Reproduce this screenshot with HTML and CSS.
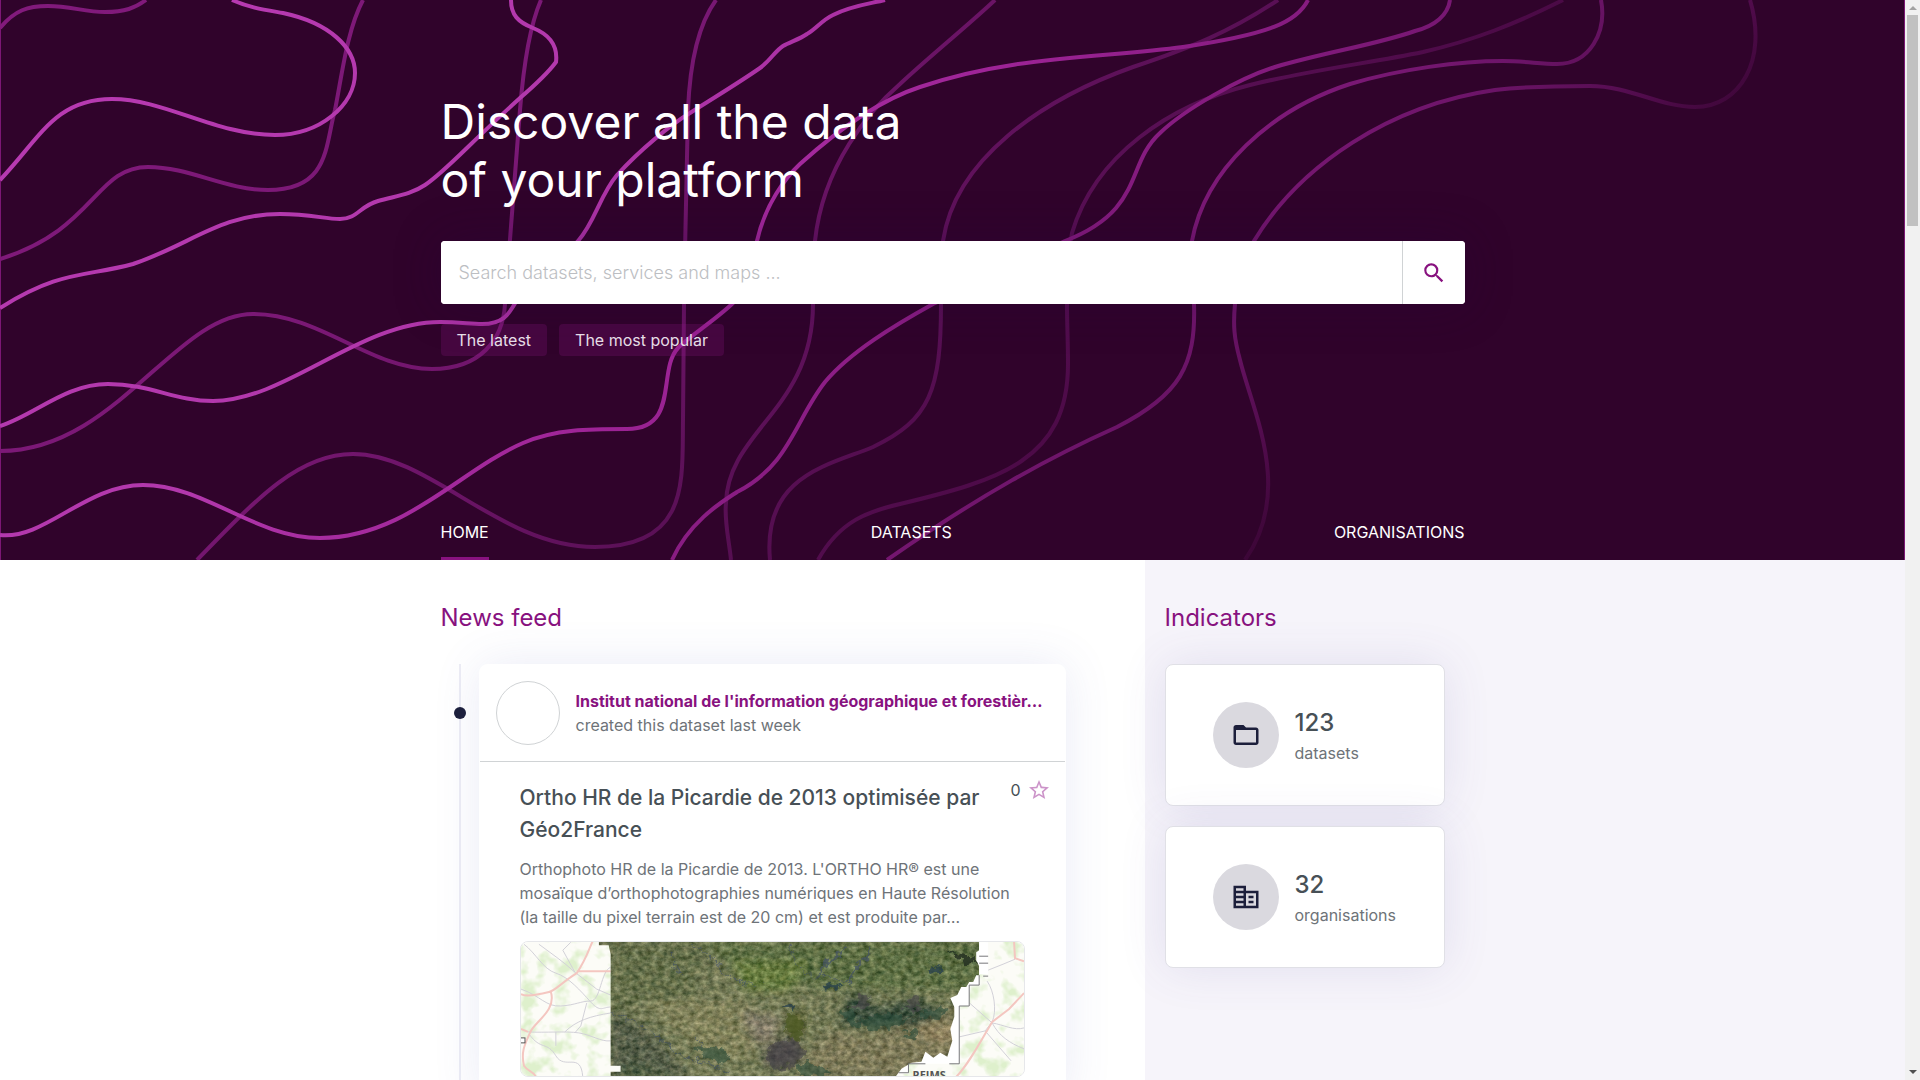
FILE: index.html
```html
<!DOCTYPE html>
<html lang="en">
<head>
<meta charset="utf-8">
<meta name="viewport" content="width=device-width, initial-scale=1">
<title>Datahub</title>
<link rel="stylesheet" href="styles.css">
</head>
<body>
<div class="page">
  <header class="hero">
    <svg class="hero-lines" viewBox="0 0 1905 560" preserveAspectRatio="xMidYMin slice" aria-hidden="true">
      <defs>
        <linearGradient id="bright" gradientUnits="userSpaceOnUse" x1="0" y1="0" x2="871" y2="962">
          <stop offset="0" stop-color="#b83ab2"/><stop offset=".38" stop-color="#b238ac"/><stop offset=".55" stop-color="#9e2497"/><stop offset=".7" stop-color="#821a7c"/><stop offset=".82" stop-color="#6c1468"/><stop offset=".92" stop-color="#4c0a47"/><stop offset="1" stop-color="#30032b"/>
        </linearGradient>
        <linearGradient id="dim" gradientUnits="userSpaceOnUse" x1="0" y1="0" x2="871" y2="962">
          <stop offset="0" stop-color="#821a7c"/><stop offset=".35" stop-color="#7a1875"/><stop offset=".5" stop-color="#6c1467"/><stop offset=".65" stop-color="#5a1056"/><stop offset=".8" stop-color="#4c0a47"/><stop offset=".95" stop-color="#30032b"/>
        </linearGradient>
      </defs>
      <g class="lines" stroke="url(#dim)">
        <path d="M0 28C15 10 28 6 48 6C70 6 85 12 105 12C125 12 135 8 146 0"/>
        <path d="M0 259C95 230 95 167 148 167C190 167 225 190 268 190C330 190 325 145 335 110C342 75 347 30 363 0"/>
        <path d="M0 451C115 451 175 314 253 314C320 314 370 369 432 369C480 369 503 340 505 304C509 250 514 180 520 110C524 60 530 25 541 0"/>
        <path d="M197 560C260 495 300 454 353 454C430 454 500 547 595 547C690 547 682 480 683 420L684 304C685 240 687 170 688 110C690 60 700 22 716 0"/>
        <path d="M731 560C729 540 724 520 726 503C728 430 813 410 813 304C813 285 813 265 815 241C823 165 870 110 900 84C930 56 965 28 995 0"/>
        <path d="M770 560C762 475 830 465 873 447C930 420 941 390 941 304C941 285 941 260 943 241C955 160 1040 100 1133 67C1190 48 1230 32 1278 0"/>
        <path d="M818 560C840 520 870 511 900 504C1000 480 1068 460 1068 364C1068 340 1067 325 1067 304C1067 280 1067 260 1072 233C1095 155 1170 105 1250 85C1310 70 1370 63 1423 52C1475 40 1515 24 1563 0"/>
      </g>
      <g class="lines" stroke="url(#bright)">
        <path d="M232 0C250 8 266 10 283 13C330 23 355 48 355 73C355 105 320 135 275 135C215 135 165 99 112 99C55 99 40 138 0 180"/>
        <path d="M0 308C60 270 85 277 133 264C190 245 220 214 280 214C310 214 325 219 340 219C357 219 360 206 378 201C395 196 410 195 425 185C445 172 470 143 520 98C535 85 548 73 556 62C558 45 548 34 533 28C518 22 511 15 511 0"/>
        <path d="M0 426C35 415 65 384 108 384C150 384 175 401 213 401C285 401 360 322 440 322C460 322 470 324 482 324C515 324 510 300 530 285C550 270 565 257 578 241C595 222 600 195 617 175C640 150 670 125 690 113C715 97 740 82 760 68C770 61 775 51 783 46C790 42 800 39 807 34C815 30 822 20 833 15C850 6 868 4 885 0"/>
        <path d="M0 535C45 540 85 485 143 485C205 485 255 538 320 538C405 538 460 470 523 443C555 429 590 429 627 429C680 429 657 370 678 348C690 336 715 320 732 304C755 285 750 262 757 241C765 205 785 178 800 164C840 128 880 100 920 87C1010 56 1100 58 1183 47C1270 34 1297 22 1308 0"/>
        <path d="M672 560C690 520 725 500 737 492C790 465 795 420 825 382C850 352 895 325 933 304C975 285 1020 262 1065 241C1145 210 1125 165 1160 133C1185 109 1240 78 1275 67C1330 51 1375 45 1415 31C1435 26 1448 15 1450 0"/>
        <path d="M887 560C980 495 1050 457 1117 427C1180 395 1196 365 1194 304C1190 280 1190 262 1192 241C1205 170 1270 110 1350 84C1400 69 1460 61 1503 61C1525 61 1540 64 1557 64C1590 64 1607 32 1601 0"/>
        <path d="M1245 560C1294 490 1252 410 1240 360C1234 338 1233 325 1235 304C1237 280 1243 260 1254 241C1300 165 1390 105 1495 90C1530 86 1560 86 1590 86C1630 86 1660 107 1695 107C1740 107 1768 60 1750 0"/>
      </g>
    </svg>
    <div class="container hero-content">
      <h1 class="hero-title">Discover all the data<br>of your platform</h1>
      <form class="search" role="search">
        <input class="search-input" type="text" aria-label="Search" placeholder="Search datasets, services and maps ...">
        <button class="search-button" type="button" aria-label="Search">
          <svg viewBox="0 0 24 24" width="26" height="26"><path fill="currentColor" d="M15.5 14h-.79l-.28-.27A6.47 6.47 0 0 0 16 9.500 6.500 6.500 0 1 0 9.500 16c1.610 0 3.090-.59 4.230-1.570l.27.28v.79l5 4.990L20.490 19l-4.990-5zm-6 0C7.010 14 5 11.990 5 9.500S7.010 5 9.500 5 14 7.010 14 9.500 11.990 14 9.500 14z"/></svg>
        </button>
      </form>
      <div class="chips">
        <button class="chip" type="button">The latest</button>
        <button class="chip" type="button">The most popular</button>
      </div>
      <nav class="tabs">
        <a class="tab tab-active" href="#home">HOME</a>
        <a class="tab" href="#datasets">DATASETS</a>
        <a class="tab" href="#organisations">ORGANISATIONS</a>
      </nav>
    </div>
  </header>

  <main class="main">
    <section class="news">
      <h2 class="heading">News feed</h2>
      <div class="feed">
        <div class="timeline"><span class="dot"></span></div>
        <article class="post">
          <div class="post-head">
            <span class="avatar"></span>
            <div class="post-meta">
              <a class="org" href="#ign">Institut national de l'information géographique et forestièr…</a>
              <p class="action">created this dataset last week</p>
            </div>
          </div>
          <div class="post-body">
            <div class="post-top">
              <h3 class="post-title">Ortho HR de la Picardie de 2013 optimisée par Géo2France</h3>
              <button class="favorite" type="button" aria-label="Add to favorites">0
                <svg viewBox="0 0 24 24" width="24" height="24"><path fill="currentColor" d="M22 9.240l-7.190-.62L12 2 9.190 8.630 2 9.240l5.460 4.730L5.820 21 12 17.270 18.180 21l-1.630-7.030L22 9.240zM12 15.400l-3.760 2.270 1-4.280-3.320-2.880 4.380-.38L12 6.100l1.710 4.040 4.380.38-3.320 2.880 1 4.280L12 15.400z"/></svg>
              </button>
            </div>
            <p class="description">Orthophoto HR de la Picardie de 2013. L'ORTHO HR® est une mosaïque d’orthophotographies numériques en Haute Résolution (la taille du pixel terrain est de 20 cm) et est produite par…</p>
            <svg class="map" viewBox="0 0 505 136" preserveAspectRatio="xMidYMid slice" role="img" aria-label="Dataset preview">
              <defs>
                <filter id="fields" x="0" y="0" width="100%" height="100%" color-interpolation-filters="sRGB">
                  <feTurbulence type="fractalNoise" baseFrequency=".16 .2" numOctaves="4" seed="8"/>
                  <feColorMatrix type="matrix" values="1 0 0 0 0  .9 .1 0 0 0  .8 .1 .1 0 0  0 0 0 0 1" result="g"/>
                  <feComposite in="SourceGraphic" in2="g" operator="arithmetic" k1="0" k2="1" k3=".5" k4="-.25"/>
                  <feColorMatrix type="matrix" values="1 0 0 0 0  0 1 0 0 0  0 0 1 0 0  0 0 0 0 1"/>
                </filter>
                <filter id="light" x="0" y="0" width="100%" height="100%" color-interpolation-filters="sRGB">
                  <feTurbulence type="fractalNoise" baseFrequency=".06" numOctaves="3" seed="3"/>
                  <feColorMatrix type="matrix" values="0 0 0 0 .87  0 0 0 0 .94  0 0 0 0 .8  0 4 0 0 -1.900"/>
                </filter>
                <filter id="soft" x="-30%" y="-30%" width="160%" height="160%"><feGaussianBlur stdDeviation="5"/></filter>
                <filter id="rough" x="-10%" y="-10%" width="120%" height="120%">
                  <feTurbulence type="fractalNoise" baseFrequency=".12" numOctaves="3" seed="5"/>
                  <feDisplacementMap in="SourceGraphic" scale="16" xChannelSelector="R" yChannelSelector="G"/>
                </filter>
                <clipPath id="photo"><path d="M78 0H460V9L457 11V19L460 25V34H457L454 41H450L447 46H442L438 54L431 57L435 66V76L431 88L433 100L428 116L421 112L414 117L406 111L402 121L392 122L382 128L376 136H90V131H100V125H90V13L88 4H78Z"/></clipPath>
              </defs>
              <rect width="505" height="136" fill="#fcfcf7"/>
              <rect width="505" height="136" filter="url(#light)"/>
              <g fill="none" stroke="#d2d1d8" stroke-width="1">
                <path d="M3 3C15 12 22 28 35 32S60 50 70 61S82 66 90 66M0 48C20 55 25 66 40 65S60 60 70 60S80 30 90 26M7 91C25 92 45 90 58 92S80 101 90 100M8 93C20 110 26 100 35 115S60 110 62 136M35 91V105M18 3C30 12 42 20 54 31M50 1L42 9L54 31L76 48L90 54M44 91C55 80 70 75 90 72M66 62L60 85L54 92"/>
                <path d="M468 40C475 50 478 70 473 81L466 90M473 82C485 84 495 90 505 87M473 82L448 60M473 82C480 95 490 102 505 108M496 18L484 23L469 29M440 96L466 90L492 120"/>
              </g>
              <g fill="none" stroke="#f4c6c0" stroke-width="2">
                <path d="M72 0C68 8 66 17 56 32C40 42 34 50 28 51C20 53 5 56 0 53M56 30H90M30 51C36 70 12 82 9 92C3 105 0 112 3 125C7 131 12 130 15 136M7 91L0 88"/>
                <path d="M495 0L496 17L505 20M505 52L490 68L473 81C460 103 449 124 437 136"/>
              </g>
              <path d="M458 1H469V33H460V44H450V65H440V123H389V133H370L400 112L430 90V57L450 40Z" fill="#fff"/>
              <g clip-path="url(#photo)">
                <g filter="url(#fields)">
                  <rect width="505" height="136" fill="#747a56"/>
                  <g filter="url(#soft)">
                    <path d="M90 0H190L170 60L110 60L90 130Z" fill="#66704b"/>
                    <path d="M180 0H470V50L300 48L210 25Z" fill="#5f7044"/>
                    <path d="M210 20H290L270 50H225Z" fill="#677c3f"/>
                    <path d="M90 70L135 95L170 136H90Z" fill="#565f48"/>
                    <path d="M125 60H225L240 100L225 120L180 110Z" fill="#80815a"/>
                    <path d="M220 70L260 75L255 100L235 105Z" fill="#827b68"/>
                    <path d="M245 108L275 92L282 120L260 127L244 124Z" fill="#504d4a"/>
                    <path d="M310 90L350 95L440 65V136H280L290 108Z" fill="#7d7958"/>
                    <path d="M402 83H435V105L402 98Z" fill="#928461"/>
                    <path d="M330 55L345 52L355 68L395 58L425 72L400 85L318 84Z" fill="#3d503c"/>
                    <path d="M268 72H286L278 100L268 95Z" fill="#535a2a"/>
                    <path d="M110 120L90 136H160Z" fill="#49583f"/>
                  </g>
                </g>
                <g filter="url(#rough)">
                  <path d="M340 80L365 71L395 78L380 87L350 88ZM320 72L334 69L342 82L330 87ZM402 70L425 68L420 78L400 77ZM172 106L193 104L212 118L204 123L180 115ZM275 127L290 122L310 131L300 136H280ZM384 92L397 90L398 98L384 96Z" fill="#2c4c3a" opacity=".55"/>
                  <path d="M330 65L336 60L345 52L350 54L348 66L334 69ZM382 65L390 63L393 52L398 53L402 66L390 70ZM246 108L272 98L285 110L278 124L252 127Z" fill="#47444a" opacity=".6"/>
                  <path d="M267 72L276 74L287 82L277 100L268 96L266 85Z" fill="#4b5825" opacity=".7"/>
                  <path d="M263 65L269 60L276 63L273 70ZM303 43L312 42L321 47L315 50L306 48ZM412 23L424 27L420 32L412 31Z" fill="#213d4b" opacity=".7"/>
                  <path d="M426 10L442 12L460 20L444 22L436 14Z" fill="#273422" opacity=".9"/>
                </g>
                <g fill="none" stroke="#445265" stroke-width="1" opacity=".7" filter="url(#rough)">
                  <path d="M326 4L318 15L303 28L300 33M351 5L344 20L333 29L331 43" stroke-width="3"/>
                  <path d="M268 2L276 20L285 32L315 36L330 45M172 2L195 20L210 38L240 45M90 70L130 90L160 115L210 130M175 95L182 110M150 10L160 35"/>
                </g>
              </g>
              <path d="M460 15H469M460 22H469M464 35H469M460 34V44H450V65H440V123H430M406 123H389V132H379" fill="none" stroke="#77777a"/>
              <rect x="-1" y="97" width="5" height="5" fill="#fff" stroke="#555"/>
              <text class="map-label" x="393" y="138">REIMS</text>
            </svg>
          </div>
        </article>
      </div>
    </section>

    <aside class="indicators">
      <h2 class="heading">Indicators</h2>
      <div class="figures">
        <a class="figure" href="#datasets">
          <span class="figure-icon"><svg viewBox="0 0 24 24" width="30" height="30"><path fill="currentColor" d="M9.170 6l2 2H20v10H4V6h5.170M10 4H4c-1.100 0-1.990.9-1.990 2L2 18c0 1.100.9 2 2 2h16c1.100 0 2-.9 2-2V8c0-1.100-.9-2-2-2h-8l-2-2z"/><path fill="currentColor" d="M4 5h6l3 3H4z"/></svg></span>
          <span class="figure-text"><strong class="figure-number">123</strong><span class="figure-label">datasets</span></span>
        </a>
        <a class="figure" href="#organisations">
          <span class="figure-icon"><svg viewBox="0 0 24 24" width="30" height="30"><path fill="currentColor" d="M12 7V3H2v18h20V7H12zM6 19H4v-2h2v2zm0-4H4v-2h2v2zm0-4H4V9h2v2zm0-4H4V5h2v2zm4 12H6v-2h4v2zm0-4H6v-2h4v2zm0-4H6V9h4v2zm0-4H6V5h4v2zm10 12h-8V9h8v10zm-2-8h-4v2h4v-2zm0 4h-4v2h4v-2z"/></svg></span>
          <span class="figure-text"><strong class="figure-number">32</strong><span class="figure-label">organisations</span></span>
        </a>
      </div>
    </aside>
  </main>
</div>
<div class="scrollbar" aria-hidden="true">
  <span class="arrow arrow-up"></span>
  <span class="thumb"></span>
  <span class="arrow arrow-down"></span>
</div>
</body>
</html>
```
FILE: styles.css
```css
* { box-sizing: border-box; }

body {
  margin: 0;
  display: flex;
  height: 100vh;
  overflow: hidden;
  background: #fff;
  color: #475056;
  font-family: Inter, "Liberation Sans", sans-serif;
  font-size: 16px;
  line-height: 24px;
}

h1, h2, h3, p { margin: 0; font-weight: 400; }
a { color: inherit; text-decoration: none; }
button, input { font: inherit; border: 0; margin: 0; }
svg { display: block; }

.page {
  flex: 1;
  min-width: 0;
  display: flex;
  flex-direction: column;
  overflow: hidden;
}

.container {
  width: 100%;
  max-width: 1024px;
  margin: 0 auto;
}

/* Hero */
.hero {
  position: relative;
  display: flex;
  flex: none;
  min-height: 560px;
  background: #30032b;
  box-shadow: inset 1px 0 #7c1775, inset -1px 0 #7c1775;
  color: #fff;
}
.hero-lines {
  position: absolute;
  inset: 0;
  width: 100%;
  height: 100%;
}
.lines { fill: none; stroke-width: 4; }
.hero-content {
  position: relative;
  display: flex;
  flex-direction: column;
  padding-top: 93px;
}
.hero-title {
  margin-bottom: 32px;
  font-size: 48px;
  font-weight: 400;
  line-height: 58px;
}
.search {
  display: flex;
  height: 63px;
  border-radius: 4px;
  overflow: hidden;
  background: #fff;
  box-shadow: 0 0 48px rgba(35, 0, 60, .3);
}
.search-input {
  flex: 1;
  min-width: 0;
  padding: 0 18px;
  background: #fff;
  color: #475056;
  font-size: 18px;
  font-weight: 300;
  outline: 0;
}
.search-input::placeholder { color: #bcbec2; opacity: 1; }
.search-button {
  display: grid;
  place-items: center;
  width: 63px;
  padding: 0;
  border-left: 1px solid #d0d3d5;
  background: #fff;
  color: #88127f;
}
.chips {
  display: flex;
  gap: 12px;
  margin-top: 20px;
}
.chip {
  height: 32px;
  padding: 0 16px;
  border-radius: 4px;
  background: rgba(136, 18, 127, .25);
  color: #e6dde6;
  line-height: 32px;
}
.tabs {
  display: flex;
  justify-content: space-between;
  margin-top: auto;
}
.tab {
  padding: 12px 0 13px;
  border-bottom: 3px solid transparent;
}
.tab-active { border-bottom-color: #88127f; }

/* Two columns, the right one tinted up to the window edge */
.main {
  flex: 1 0 auto;
  display: grid;
  grid-template-columns: minmax(0, 1fr) minmax(0, 704px) 320px minmax(0, 1fr);
}
.heading {
  margin-bottom: 30px;
  color: #88127f;
  font-size: 24px;
  font-weight: 400;
  line-height: 32px;
}
.news {
  grid-column: 2;
  padding: 42px 79px 0 0;
}
.indicators {
  grid-column: 3 / 5;
  padding: 42px 20px 0;
  background: #f6f4fa;
}

/* News feed */
.feed { display: flex; }
.timeline {
  width: 2px;
  margin: 0 18px;
  background: #ededf5;
}
.dot {
  display: block;
  width: 12px;
  height: 12px;
  margin: 43px -5px 0;
  border-radius: 50%;
  background: #1c1f3b;
}
.post {
  flex: 1;
  min-width: 0;
  border: 1px solid #fff;
  border-radius: 8px;
  background: #fff;
  box-shadow: 0 0 48px rgba(80, 90, 180, .12);
}
.post-head {
  display: flex;
  align-items: center;
  gap: 16px;
  padding: 16px;
  border-bottom: 1px solid #d0d3d5;
}
.avatar {
  flex: none;
  width: 64px;
  height: 64px;
  border: 1px solid #d0d3d5;
  border-radius: 50%;
}
.post-meta { min-width: 0; }
.org {
  display: block;
  overflow: hidden;
  white-space: nowrap;
  text-overflow: ellipsis;
  color: #88127f;
  font-weight: 700;
}
.action, .description { color: #6e7378; }
.post-body { padding: 20px 40px 24px; }
.post-top {
  display: flex;
  justify-content: space-between;
  align-items: flex-start;
}
.post-title {
  font-size: 21px;
  font-weight: 500;
  line-height: 32px;
}
.favorite {
  display: flex;
  align-items: center;
  flex: none;
  gap: 6px;
  margin: -4px -26px 0 0;
  padding: 0;
  background: none;
  color: #475056;
}
.favorite svg { color: #cc94c9; }
.description {
  margin: 11px 0 12px;
}
.map {
  width: 100%;
  height: 136px;
  border: 1px solid #e6e7ea;
  border-radius: 8px;
}
.map-label {
  fill: #555;
  font: 700 11px "Open Sans", sans-serif;
}

/* Indicators */
.figures {
  display: flex;
  flex-direction: column;
  gap: 20px;
  width: 280px;
}
.figure {
  display: flex;
  align-items: center;
  gap: 16px;
  height: 142px;
  padding: 0 47px;
  border: 1px solid #e0e0e6;
  border-radius: 8px;
  background: #fff;
  box-shadow: 0 0 48px rgba(80, 70, 160, .12);
}
.figure-icon {
  display: grid;
  place-items: center;
  width: 66px;
  height: 66px;
  border-radius: 50%;
  background: #dad9df;
  color: #1c1f3b;
}
.figure-text { display: flex; flex-direction: column; padding-top: 2px; gap: 2px; }
.figure-number {
  color: #475056;
  font-size: 24px;
  font-weight: 500;
  line-height: 32px;
}
.figure-label { color: #6e7378; }

/* Window scroll bar */
.scrollbar {
  flex: none;
  display: flex;
  flex-direction: column;
  align-items: center;
  width: 15px;
  padding: 6px 0;
  background: #f1f1f1;
}
.arrow { border: 4px solid transparent; border-top: 0; }
.arrow-up { border-bottom-color: #a3a3a3; }
.arrow-down { margin-top: auto; border: 4px solid transparent; border-top-color: #505050; border-bottom: 0; }
.thumb { width: 11px; height: 211px; margin-top: 5px; background: #c1c1c1; }
```
